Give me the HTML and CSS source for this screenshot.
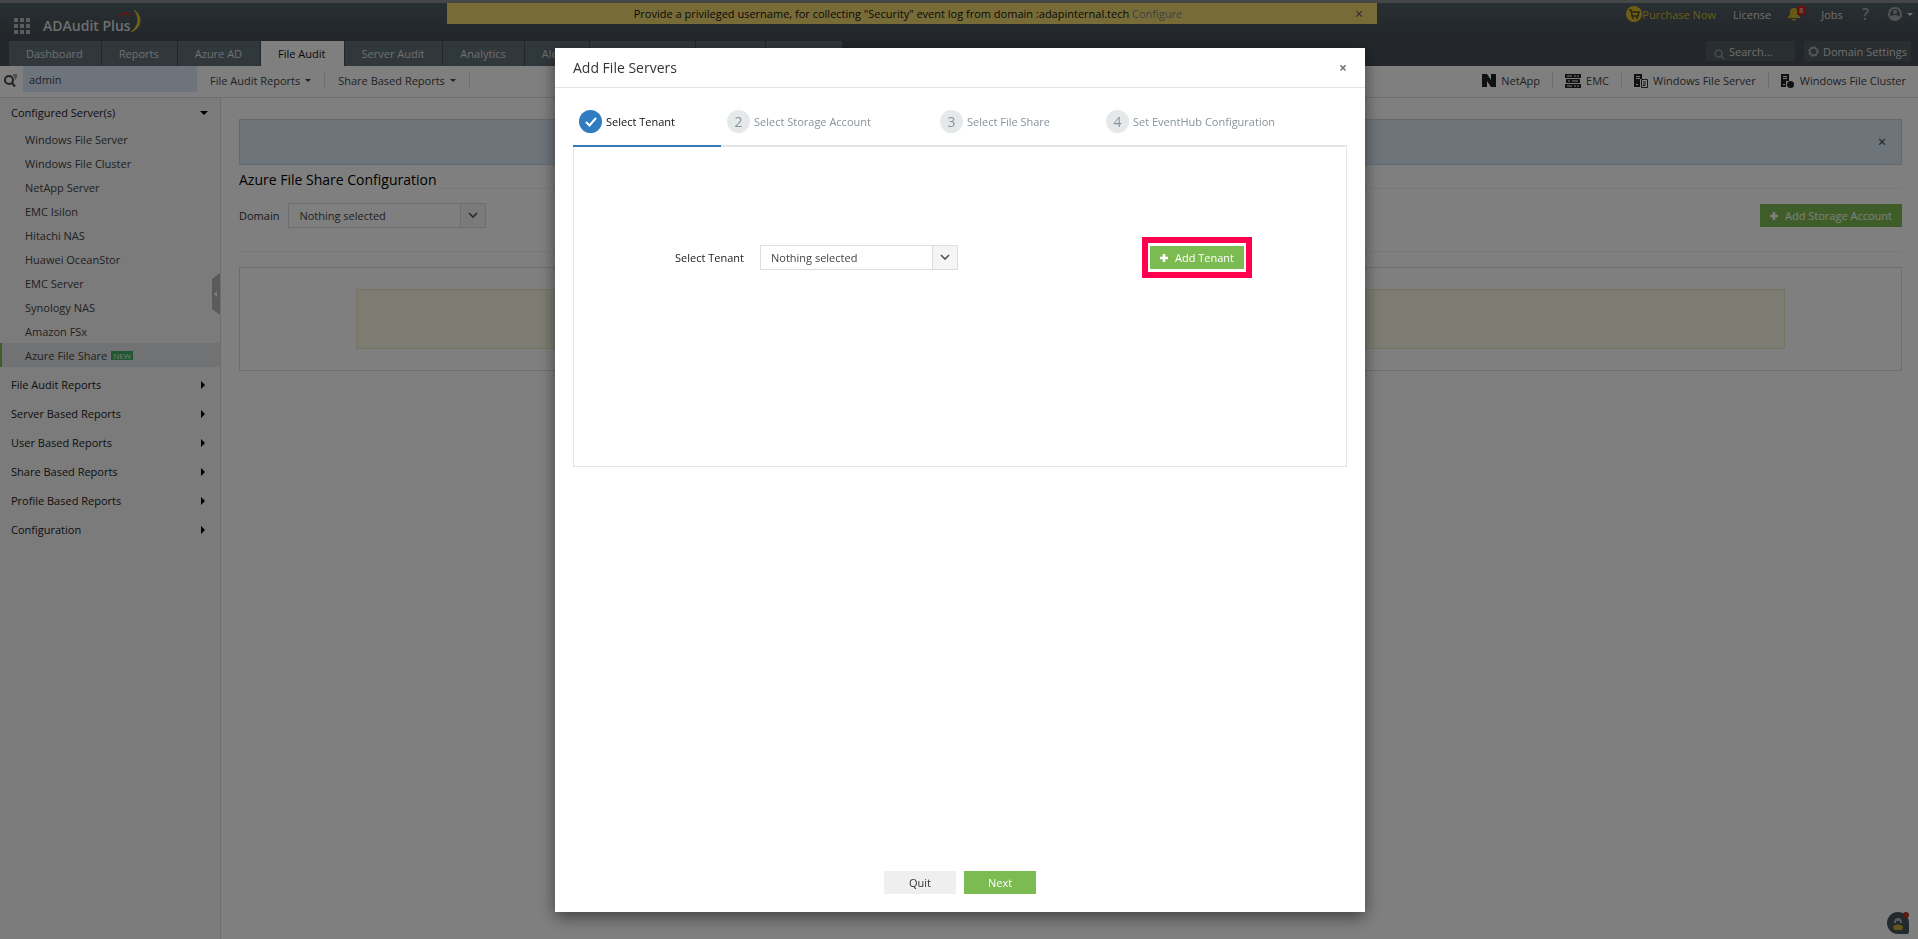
FILE: index.html
```
<!DOCTYPE html>
<html lang="en">
<head>
  <meta charset="UTF-8" />
  <meta name="viewport" content="width=device-width, initial-scale=1.0" />
  <title>ADAudit Plus - Azure File Share</title>
  <link rel="stylesheet" href="styles.css">
</head>
<body>
  <header class="header">
    <div class="header-top">
      <div class="brand">
        <svg class="apps" width="17" height="17" viewBox="0 0 17 17" fill="#b4b8ba">
          <path d="M0 0h4v4H0zM6 0h4v4H6zM12 0h4v4h-4zM0 6h4v4H0zM6 6h4v4H6zM12 6h4v4h-4zM0 12h4v4H0zM6 12h4v4H6zM12 12h4v4h-4z"/>
        </svg>
        <span class="brand-name">ADAudit Plus</span>
        <svg class="swoosh" width="26" height="26" viewBox="0 0 26 26" fill="none">
          <path d="M1 9C5 3 12 3 15 8C11 5 6 6 1 9z" fill="#b8322a" stroke="#b8322a" stroke-width=".6"/>
          <path d="M8 3C12 0 16 1 18 4" stroke="#31506e" stroke-width="1"/>
          <path d="M17 2C26 8 25 20 14 24C22 18 23 9 17 2z" fill="#e8c52c" stroke="#e8c52c" stroke-width=".8"/>
        </svg>
      </div>
      <div class="notice">
        <p>Provide a privileged username, for collecting "Security" event log from domain :adapinternal.tech <a href="#">Configure</a></p>
        <button type="button" class="close" aria-label="Dismiss">×</button>
      </div>
      <nav class="tools">
        <a href="#" class="purchase">
          <svg width="16" height="16" viewBox="0 0 16 16">
            <circle cx="8" cy="8" r="8" fill="#d8bd2c"/>
            <path d="M3 4h2l1 6h6l1-4H6" fill="none" stroke="#4a4a30" stroke-width="1.5"/>
            <circle cx="7" cy="12" r="1" fill="#4a4a30"/><circle cx="11" cy="12" r="1" fill="#4a4a30"/>
          </svg>Purchase Now</a>
        <a href="#">License</a>
        <a href="#" class="bell" aria-label="Notifications">
          <svg width="16" height="14" viewBox="0 0 16 14">
            <path d="M6 1c3 0 4 2 4 5 0 2 1 3 2 4v1H0v-1c1-1 2-2 2-4 0-3 1-5 4-5zM4 12h4c0 2-4 2-4 0z" fill="#cdb02f"/>
          </svg>
          <span class="badge">8</span>
        </a>
        <a href="#">Jobs</a>
        <a href="#" class="help">?</a>
        <a href="#" class="user" aria-label="Account">
          <svg width="14" height="14" viewBox="0 0 14 14">
            <circle cx="7" cy="7" r="6" fill="none" stroke="#a5a9ab" stroke-width="2"/>
            <circle cx="7" cy="5" r="2" fill="#a5a9ab"/>
            <path d="M2 11c1-4 9-4 10 0-2 3-8 3-10 0z" fill="#a5a9ab"/>
          </svg>
          <span class="caret"></span>
        </a>
      </nav>
    </div>
    <div class="header-tabs">
      <nav class="tabs">
        <a href="#">Dashboard</a>
        <a href="#">Reports</a>
        <a href="#">Azure AD</a>
        <a href="#" class="active">File Audit</a>
        <a href="#">Server Audit</a>
        <a href="#">Analytics</a>
        <a href="#">Alerts</a>
        <a href="#">Configuration</a>
        <a href="#">Admin</a>
        <a href="#">Support</a>
      </nav>
      <div class="quick">
        <label class="search-box">
          <svg width="11" height="11" viewBox="0 0 11 11" fill="none" stroke="#8e9498" stroke-width="1.6"><circle cx="4.5" cy="4.5" r="3.5"/><path d="M7 7l3.5 3.5"/></svg>
          <input type="text" placeholder="Search..." aria-label="Search">
        </label>
        <button type="button" class="settings">
          <svg width="11" height="11" viewBox="0 0 11 11" fill="none"><circle cx="5.5" cy="5.5" r="3.8" stroke="#a0a5a8" stroke-width="2"/><circle cx="5.5" cy="5.5" r="4.8" stroke="#a0a5a8" stroke-width="1.4" stroke-dasharray="1.6 2.2"/></svg>
          Domain Settings
        </button>
      </div>
    </div>
  </header>

  <div class="subbar">
    <svg class="find" width="13" height="13" viewBox="0 0 13 13" fill="none" stroke="#444" stroke-width="2"><circle cx="5" cy="6" r="4"/><path d="M8 9l3 3.500"/><path d="M9 1h4M10 3h3M11 5h1" stroke-width="1"/></svg>
    <input type="text" class="find-input" value="admin" aria-label="Find report">
    <nav class="menu">
      <a href="#">File Audit Reports <span class="caret"></span></a>
      <a href="#">Share Based Reports <span class="caret"></span></a>
    </nav>
    <nav class="servers">
      <a href="#">
        <svg width="14" height="13" viewBox="0 0 14 13"><path d="M0 0h5l4 6V0h5v13H9L5 7v6H0z" fill="#222"/></svg>
        NetApp</a>
      <a href="#">
        <svg width="16" height="14" viewBox="0 0 16 14" fill="#222"><path d="M0 0h16v4H0zM1 5h14v4H1zM0 10h16v4H0z"/><path d="M2 2h5M9 2h2M12 2h2M3 7h2M7 7h6M2 12h5M9 12h2M12 12h2" stroke="#fff" stroke-width="1"/></svg>
        EMC</a>
      <a href="#" class="wide">
        <svg width="14" height="14" viewBox="0 0 14 14"><path d="M0 0h8v5H6v8H0z" fill="#222"/><path d="M2 2.500h4M2 4.500h4M2 10.500h2" stroke="#fff"/><path d="M7.500 5.500h6v8h-6z" fill="#fff" stroke="#333"/><path d="M9 8h3M9 10h3M9 11.500h2" stroke="#333"/></svg>
        Windows File Server</a>
      <a href="#" class="wide">
        <svg width="14" height="14" viewBox="0 0 14 14"><path d="M0 0h8v7H5v6H0z" fill="#222"/><path d="M2 2.500h4M2 4.500h4M2 10.500h2" stroke="#fff"/><circle cx="9.500" cy="10.500" r="3.500" fill="#222"/></svg>
        Windows File Cluster</a>
    </nav>
  </div>

  <div class="layout">
    <aside class="sidebar">
      <a href="#" class="group open">Configured Server(s) <span class="arrow-down"></span></a>
      <ul>
        <li><a href="#">Windows File Server</a></li>
        <li><a href="#">Windows File Cluster</a></li>
        <li><a href="#">NetApp Server</a></li>
        <li><a href="#">EMC Isilon</a></li>
        <li><a href="#">Hitachi NAS</a></li>
        <li><a href="#">Huawei OceanStor</a></li>
        <li><a href="#">EMC Server</a></li>
        <li><a href="#">Synology NAS</a></li>
        <li><a href="#">Amazon FSx</a></li>
        <li><a href="#" class="active">Azure File Share <span class="new">NEW</span></a></li>
      </ul>
      <a href="#" class="group">File Audit Reports <span class="arrow-right"></span></a>
      <a href="#" class="group">Server Based Reports <span class="arrow-right"></span></a>
      <a href="#" class="group">User Based Reports <span class="arrow-right"></span></a>
      <a href="#" class="group">Share Based Reports <span class="arrow-right"></span></a>
      <a href="#" class="group">Profile Based Reports <span class="arrow-right"></span></a>
      <a href="#" class="group">Configuration <span class="arrow-right"></span></a>
      <button type="button" class="collapse" aria-label="Collapse sidebar">
        <svg width="8" height="42" viewBox="0 0 8 42"><path d="M8 0v42L0 36V6z" fill="#b5b5b5"/><path d="M5 18v6l-3-3z" fill="#fff"/></svg>
      </button>
    </aside>

    <main class="content">
      <div class="alert">
        <button type="button" class="close" aria-label="Dismiss">×</button>
      </div>
      <h1 class="page-title">Azure File Share Configuration</h1>
      <div class="filter">
        <label for="domain">Domain</label>
        <span class="select">
          <select id="domain"><option>Nothing selected</option></select>
          <span class="select-arrow"><svg width="10" height="7" viewBox="0 0 10 7" fill="none" stroke="#555" stroke-width="1.6"><path d="M1 1l4 4 4-4"/></svg></span>
        </span>
        <button type="button" class="btn btn-green add-storage">
          <svg width="8" height="8" viewBox="0 0 8 8"><path d="M3 0h2v3h3v2H5v3H3V5H0V3h3z" fill="#fff" stroke="#fff" stroke-width=".5"/></svg>
          Add Storage Account
        </button>
      </div>
      <div class="results"><div class="empty"></div></div>
    </main>
  </div>

  <button type="button" class="chat" aria-label="Chat">
    <svg width="24" height="24" viewBox="0 0 24 24">
      <path d="M12 1a11 11 0 1 0 0 22h9q2 0 2-2v-9A11 11 0 0 0 12 1z" fill="#47545b"/>
      <path d="M8 11a4 4 0 0 1 8 0v1H8z" fill="#aab4b8"/>
      <path d="M10 10h4v2h-4z" fill="#47545b"/>
      <path d="M7 15q5-3 10 0l-1 4H8z" fill="#c9ae3a"/>
      <circle cx="20" cy="4" r="3" fill="#b5322a"/>
    </svg>
  </button>

  <div class="overlay">
    <div class="dialog" role="dialog" aria-labelledby="dialog-title">
      <div class="dialog-header">
        <h2 id="dialog-title">Add File Servers</h2>
        <button type="button" class="close" aria-label="Close">×</button>
      </div>
      <div class="dialog-body">
        <ol class="steps">
          <li class="step current">
            <span class="num"><svg width="12" height="10" viewBox="0 0 12 10" fill="none" stroke="#fff" stroke-width="2"><path d="M1 5l3.500 3.500L11 1"/></svg></span>
            Select Tenant
          </li>
          <li class="step"><span class="num">2</span>Select Storage Account</li>
          <li class="step"><span class="num">3</span>Select File Share</li>
          <li class="step"><span class="num">4</span>Set EventHub Configuration</li>
        </ol>
        <div class="panel">
          <label for="tenant">Select Tenant</label>
          <span class="select">
            <select id="tenant"><option>Nothing selected</option></select>
            <span class="select-arrow"><svg width="10" height="7" viewBox="0 0 10 7" fill="none" stroke="#555" stroke-width="1.6"><path d="M1 1l4 4 4-4"/></svg></span>
          </span>
          <span class="highlight">
            <button type="button" class="btn btn-green">
              <svg width="8" height="8" viewBox="0 0 8 8"><path d="M3 0h2v3h3v2H5v3H3V5H0V3h3z" fill="#fff" stroke="#fff" stroke-width=".5"/></svg>
              Add Tenant
            </button>
          </span>
        </div>
      </div>
      <div class="dialog-footer">
        <button type="button" class="btn">Quit</button>
        <button type="button" class="btn btn-green">Next</button>
      </div>
    </div>
  </div>
</body>
</html>
```

FILE: styles.css
```
* {
  box-sizing: border-box;
}
body {
  margin: 0;
  min-height: 100vh;
  display: flex;
  flex-direction: column;
  font-family: 'Open Sans', sans-serif;
  font-size: 11px;
  color: #333;
  background: #fff;
}
a {
  color: inherit;
  text-decoration: none;
}
button, input, select {
  font-family: inherit;
  font-size: 11px;
  color: inherit;
}
svg {
  display: block;
  flex: none;
}
ul, ol {
  list-style: none;
  margin: 0;
  padding: 0;
}
.close {
  padding: 0;
  border: none;
  background: none;
  font-size: 14px;
  line-height: 14px;
  cursor: pointer;
}
.caret {
  border: 3px solid transparent;
  border-top-color: currentColor;
  border-bottom: none;
}

/* header */
.header {
  border-top: 3px solid #8a8c90;
  background: linear-gradient(#525f66, #464f56 30px);
  color: #dcdedf;
}
.header-top {
  display: flex;
  height: 38px;
}
.brand {
  display: flex;
  align-items: center;
  width: 447px;
  padding-left: 14px;
}
.apps {
  margin: 9px 12px 0 0;
}
.brand-name {
  margin-top: 7px;
  font-size: 14px;
  font-weight: 600;
}
.swoosh {
  margin: 0 0 2px -14px;
}
.notice {
  flex: 1;
  display: flex;
  align-items: center;
  height: 21px;
  padding: 0 14px;
  background: #eed870;
  color: #111;
}
.notice p {
  flex: 1;
  margin: 0;
  line-height: 20px;
  text-align: center;
}
.notice a {
  color: #7d8288;
}
.notice .close {
  color: #555;
}
.tools {
  display: flex;
  align-items: center;
  justify-content: flex-end;
  width: 541px;
  height: 22px;
  padding-right: 5px;
}
.tools a {
  display: flex;
  align-items: center;
  height: 14px;
  padding: 0 8px;
  border-left: 1px solid #555f65;
}
.tools .purchase {
  border-left: none;
  color: #d8bd2c;
}
.tools .bell {
  position: relative;
}
.badge {
  position: absolute;
  top: -1px;
  right: 7px;
  padding: 0 2px;
  background: #c8221c;
  color: #fff;
  font-size: 7px;
  line-height: 9px;
}
.tools .help {
  padding: 0 10px;
  font-size: 16px;
  font-weight: 600;
  color: #a5a9ab;
}
.tools .user {
  gap: 5px;
  padding-right: 0;
}
.header-tabs {
  display: flex;
  justify-content: space-between;
  height: 25px;
  padding: 0 7px 0 9px;
}
.tabs {
  display: flex;
}
.tabs a {
  padding: 0 18px 0 17px;
  border-right: 1px solid #464f56;
  background: #627079;
  line-height: 25px;
}
.tabs .active {
  background: #fff;
  color: #111;
}
.quick {
  display: flex;
  gap: 9px;
  height: 20px;
}
.search-box, .settings {
  display: flex;
  align-items: center;
  border: none;
  background: #525c62;
  color: #dcdedf;
}
.search-box {
  gap: 4px;
  width: 89px;
  padding-left: 8px;
}
.search-box svg {
  margin-top: 6px;
}
.search-box input {
  width: 60px;
  padding: 0;
  border: none;
  background: none;
}
.search-box input::placeholder {
  color: #dcdedf;
}
.settings {
  gap: 4px;
  padding: 0 4px;
}

/* report bar */
.subbar {
  display: flex;
  align-items: center;
  height: 32px;
  padding: 0 0 2px 4px;
  border-bottom: 1px solid #dcdcdc;
  color: #444;
}
.find-input {
  align-self: flex-start;
  width: 174px;
  height: 26px;
  margin-left: 6px;
  padding: 0 6px;
  border: none;
  background: #dbe9f7;
}
.menu, .servers {
  display: flex;
}
.menu a, .servers a {
  display: flex;
  align-items: center;
  height: 17px;
  gap: 5px;
  padding: 0 13px;
  border-right: 1px solid #dcdcdc;
}
.servers {
  margin-left: auto;
}
.servers a {
  padding: 0 12px;
}
.servers a:last-child {
  border-right: none;
}

/* page */
.layout {
  flex: 1;
  display: flex;
}
.sidebar {
  position: relative;
  width: 221px;
  border-right: 1px solid #dcdcdc;
  background: #f7f7f7;
}
.group {
  display: flex;
  align-items: center;
  justify-content: space-between;
  height: 29px;
  padding: 0 15px 0 11px;
  font-weight: 500;
  color: #222;
}
.sidebar .open {
  padding-right: 12px;
}
.arrow-down {
  border: 4px solid transparent;
  border-top-color: #000;
  border-bottom: none;
}
.arrow-right {
  border: 4px solid transparent;
  border-left-color: #000;
  border-right: none;
}
.sidebar ul {
  margin-bottom: 3px;
}
.sidebar li a {
  display: flex;
  align-items: center;
  height: 24px;
  padding-left: 25px;
  color: #444;
}
.sidebar li .active {
  padding-left: 23px;
  border-left: 2px solid #7cbb52;
  background: #e3e5e7;
}
.new {
  margin-left: 4px;
  padding: 0 2px;
  background: #3fae6a;
  color: #dff3e6;
  font-size: 8px;
  line-height: 9px;
}
.collapse {
  position: absolute;
  top: 175px;
  right: 0;
  padding: 0;
  border: none;
  background: none;
}
.content {
  flex: 1;
  padding: 21px 16px 0 18px;
}
.alert {
  display: flex;
  align-items: center;
  justify-content: flex-end;
  height: 46px;
  padding-right: 15px;
  border: 1px solid #c3d5e2;
  background: #dbe9f5;
}
.page-title {
  display: flex;
  align-items: center;
  margin: 6px 0 0;
  font-size: 14px;
  font-weight: 500;
  line-height: 18px;
  color: #000;
}
.page-title::after {
  content: "";
  flex: 1;
  align-self: flex-end;
  border-bottom: 1px solid #f0f0f0;
}
.filter {
  display: flex;
  align-items: center;
  padding: 14px 0 23px;
  border-bottom: 1px solid #f0f0f0;
}
.filter label {
  margin-right: 9px;
}
.add-storage {
  margin-left: auto;
}
.select {
  display: grid;
  grid-template-columns: 1fr 26px;
  width: 198px;
  height: 25px;
}
.select select {
  grid-area: 1 / 1 / 2 / 3;
  padding: 0 10px;
  border: 1px solid #ddd;
  border-radius: 0;
  background: #fff;
  color: #444;
  appearance: none;
}
.select-arrow {
  grid-area: 1 / 2;
  display: flex;
  align-items: center;
  justify-content: center;
  border: 1px solid #ddd;
  background: #f5f5f5;
  pointer-events: none;
}
.btn {
  display: flex;
  align-items: center;
  justify-content: center;
  gap: 7px;
  height: 23px;
  padding: 0 10px;
  border: none;
  background: #efefef;
  cursor: pointer;
}
.btn-green {
  background: #7cbb52;
  color: #fff;
  font-weight: 500;
}
.results {
  margin-top: 15px;
  padding: 21px 7%;
  border: 1px solid #ddd;
}
.empty {
  height: 60px;
  border: 1px solid #ebe8c8;
  background: #f9f8e4;
}
.chat {
  position: fixed;
  right: 8px;
  bottom: 4px;
  padding: 0;
  border: none;
  background: none;
}

/* dialog */
.overlay {
  position: fixed;
  inset: 0;
  display: flex;
  justify-content: center;
  padding: 48px 0 27px 2px;
  background: rgba(0, 0, 0, 0.5);
}
.dialog {
  display: flex;
  flex-direction: column;
  width: 100%;
  max-width: 810px;
  background: #fff;
  box-shadow: 0 5px 15px rgba(0, 0, 0, 0.5);
}
.dialog-header {
  display: flex;
  align-items: center;
  justify-content: space-between;
  height: 40px;
  padding: 0 18px;
  border-bottom: 1px solid #e3e5e7;
}
.dialog-header h2 {
  margin: 0;
  font-size: 14px;
  font-weight: 400;
}
.dialog-header .close {
  color: #777;
  font-weight: 700;
}
.dialog-body {
  flex: 1;
  padding: 10px 18px;
}
.steps {
  display: grid;
  grid-template-columns: 148fr 213fr 166fr 247fr;
}
.step {
  display: flex;
  align-items: center;
  gap: 4px;
  height: 49px;
  padding-left: 6px;
  border-bottom: 2px solid #e3e5e7;
  color: #87929a;
}
.num {
  display: flex;
  align-items: center;
  justify-content: center;
  width: 23px;
  height: 23px;
  border-radius: 50%;
  background: #e6e9ea;
  font-size: 14px;
}
.step.current {
  border-bottom-color: #3b7ab5;
  color: #111;
}
.current .num {
  background: #2f7cc0;
}
.panel {
  display: flex;
  align-items: center;
  padding: 90px 94px 188px 101px;
  border: 1px solid #e3e5e7;
  border-top: none;
  color: #222;
}
.panel label {
  margin-right: 16px;
}
.highlight {
  margin-left: auto;
  padding: 3px 2px;
  border: 6px solid #ff004f;
}
.dialog-footer {
  display: flex;
  justify-content: center;
  gap: 8px;
  padding-bottom: 18px;
}
.dialog-footer .btn {
  width: 72px;
}
```
